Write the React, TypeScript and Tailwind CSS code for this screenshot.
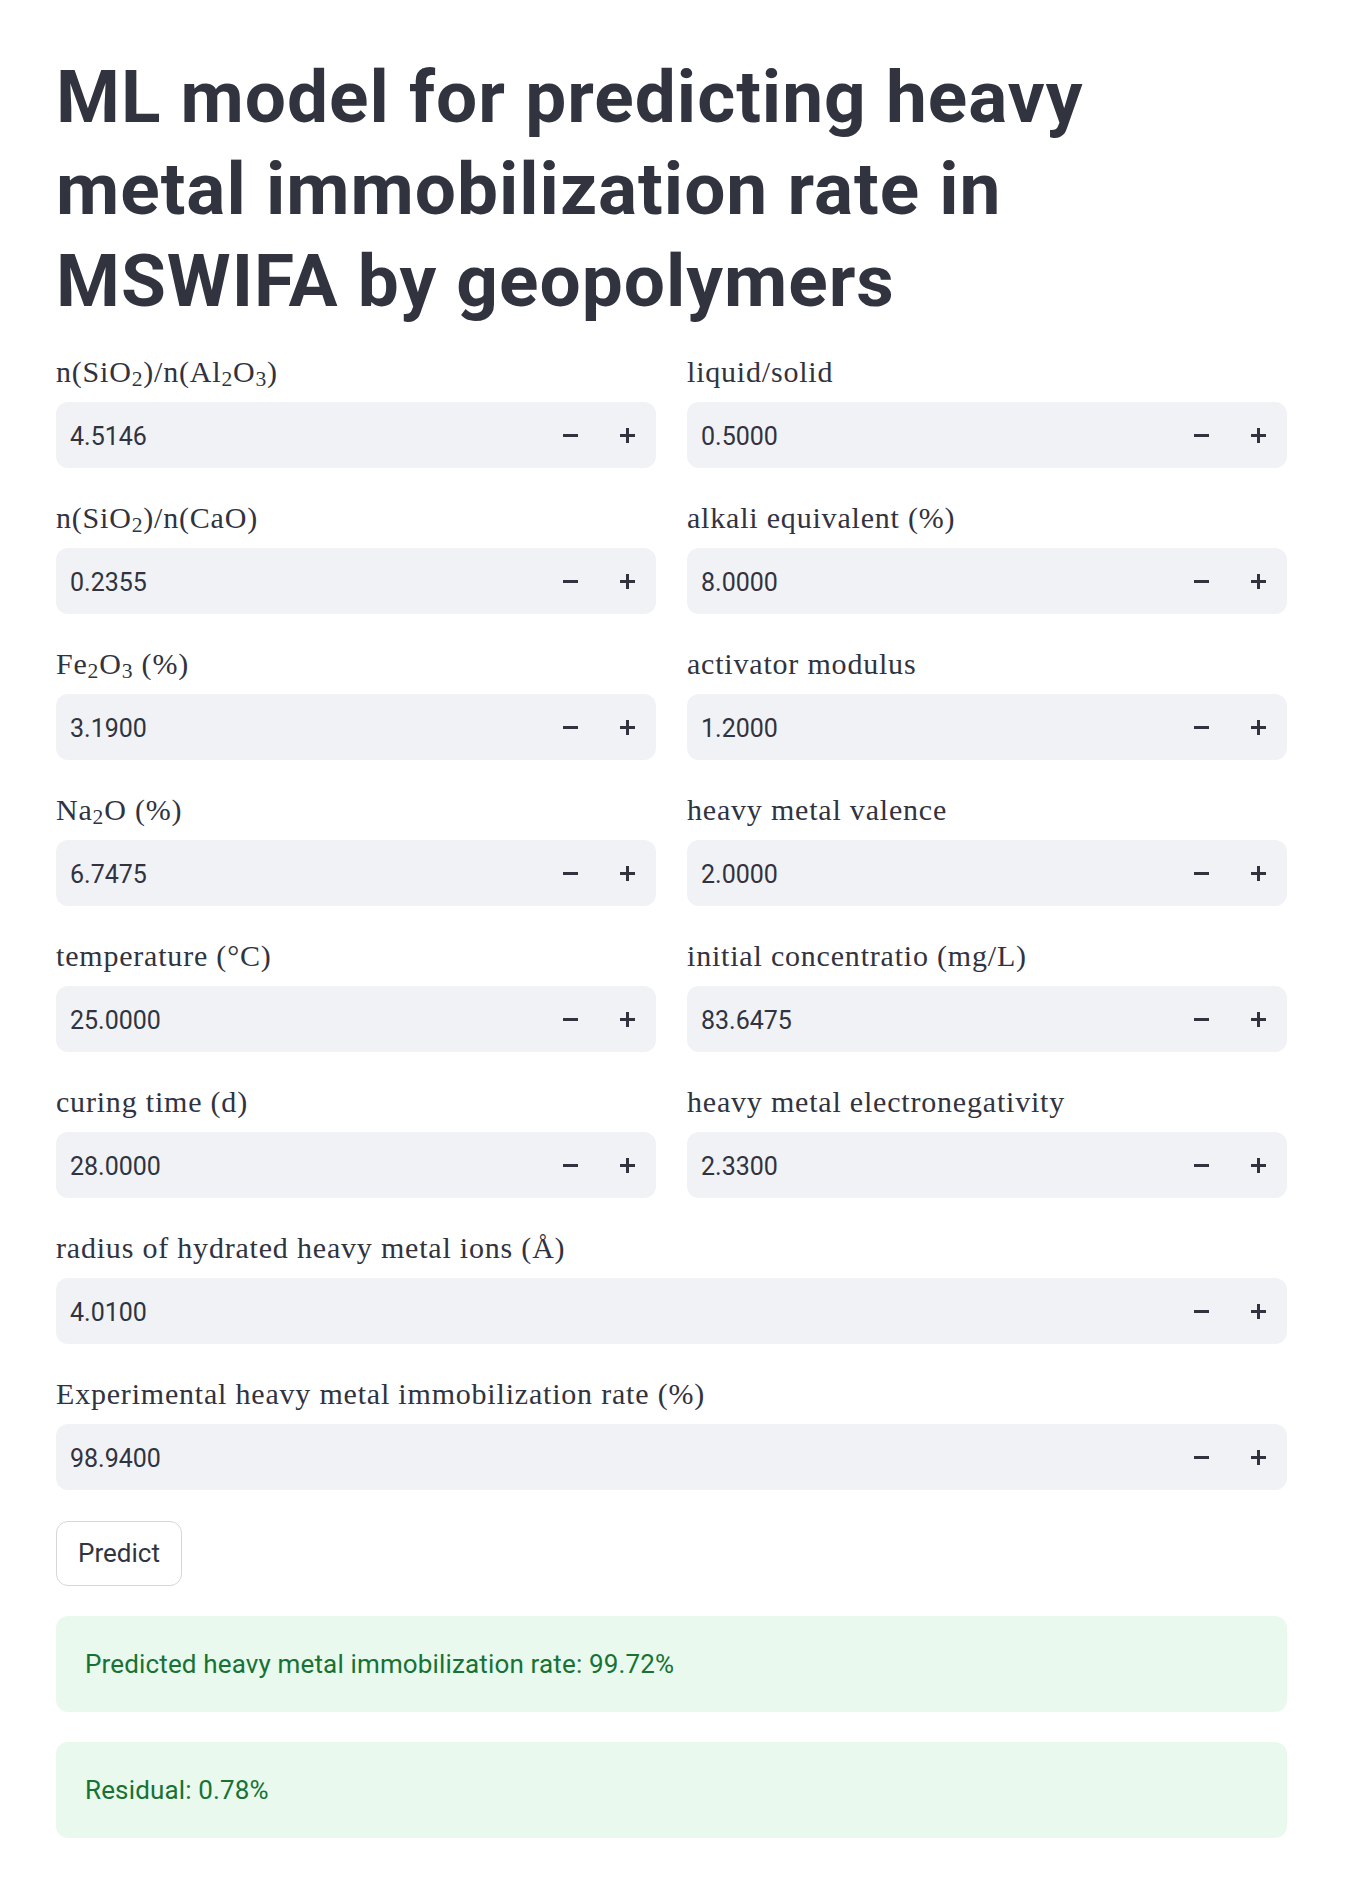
import React from 'react';

type Field = { label: React.ReactNode; value: string; full?: boolean };

// KaTeX-like subscript: smaller digit, slightly lowered
const Sub: React.FC<{ children: React.ReactNode }> = ({ children }) => (
  <span className="text-[0.72em] relative top-[0.18em]">{children}</span>
);

const fields: Field[] = [
  { label: <>n(SiO<Sub>2</Sub>)/n(Al<Sub>2</Sub>O<Sub>3</Sub>)</>, value: '4.5146' },
  { label: 'liquid/solid', value: '0.5000' },
  { label: <>n(SiO<Sub>2</Sub>)/n(CaO)</>, value: '0.2355' },
  { label: 'alkali equivalent (%)', value: '8.0000' },
  { label: <>Fe<Sub>2</Sub>O<Sub>3</Sub> (%)</>, value: '3.1900' },
  { label: 'activator modulus', value: '1.2000' },
  { label: <>Na<Sub>2</Sub>O (%)</>, value: '6.7475' },
  { label: 'heavy metal valence', value: '2.0000' },
  { label: 'temperature (°C)', value: '25.0000' },
  { label: 'initial concentratio (mg/L)', value: '83.6475' },
  { label: 'curing time (d)', value: '28.0000' },
  { label: 'heavy metal electronegativity', value: '2.3300' },
  { label: 'radius of hydrated heavy metal ions (Å)', value: '4.0100', full: true },
  { label: 'Experimental heavy metal immobilization rate (%)', value: '98.9400', full: true },
];

const Minus = () => (
  <svg width="15" height="15" viewBox="0 0 15 15">
    <rect x="0" y="6" width="15" height="3" fill="#31333F" />
  </svg>
);

const Plus = () => (
  <svg width="15" height="15" viewBox="0 0 15 15">
    <rect x="0" y="6" width="15" height="3" fill="#31333F" />
    <rect x="6" y="0" width="3" height="15" fill="#31333F" />
  </svg>
);

const NumberInput: React.FC<Field> = ({ label, value, full }) => (
  <div className={full ? 'col-span-2' : ''}>
    <div className="relative -top-[2px] h-[38px] leading-[38px] mb-[9px] text-[30px] tracking-[0.8px] text-[#31333F] font-['Liberation_Serif',serif] whitespace-nowrap">
      {label}
    </div>
    <div className="h-[66px] rounded-[12px] bg-[#f0f2f6] flex items-center">
      <span className="flex-1 pl-[14px] pt-[3px] text-[25px] text-[#31333F] font-['Roboto',sans-serif]">{value}</span>
      <div className="w-[57px] h-full flex items-center justify-center"><Minus /></div>
      <div className="w-[57px] h-full flex items-center justify-center"><Plus /></div>
    </div>
  </div>
);

const App: React.FC = () => {
  return (
    <div className="min-h-[1883px] bg-white pl-[56px] pt-[51px] pb-[43px] text-[#31333F] font-['Roboto',sans-serif]">
      <div className="w-[1231px]">
        <h1 className="text-[73px] leading-[92px] font-bold tracking-[1px] mb-[28px] whitespace-nowrap">
          ML model for predicting heavy<br />
          metal immobilization rate in<br />
          MSWIFA by geopolymers
        </h1>

        <div className="grid grid-cols-2 gap-x-[31px] gap-y-[33px]">
          {fields.map((f, i) => (
            <NumberInput key={i} {...f} />
          ))}
        </div>

        <button className="mt-[31px] h-[65px] w-[126px] rounded-[12px] border border-[#d6d6d9] bg-white text-[26px] text-[#31333F] flex items-center justify-center">
          Predict
        </button>

        <div className="mt-[30px] h-[96px] rounded-[12px] bg-[#e9f9ee] flex items-center px-[29px] text-[26px] tracking-[0.15px] text-[#177233]">
          Predicted heavy metal immobilization rate: 99.72%
        </div>
        <div className="mt-[30px] h-[96px] rounded-[12px] bg-[#e9f9ee] flex items-center px-[29px] text-[26px] tracking-[0.15px] text-[#177233]">
          Residual: 0.78%
        </div>
      </div>
    </div>
  );
};

export default App;
